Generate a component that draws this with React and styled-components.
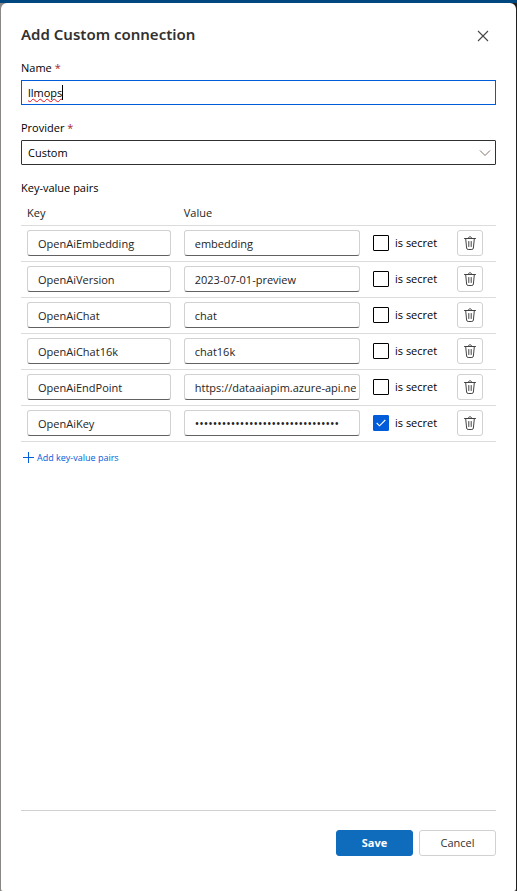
import React, { useState } from "react";
import styled, { createGlobalStyle } from "styled-components";

const GlobalStyle = createGlobalStyle`
  * { box-sizing: border-box; }
  body {
    margin: 0;
    background: #8a8886;
    color: #000;
    font: 11px/16px "Open Sans", "Noto Sans", sans-serif;
  }
  button, input, select { font: inherit; color: inherit; }
`;

const Page = styled.div`
  display: flex;
  flex-direction: column;
  min-height: 100vh;
  border-top: 3px solid #00467f;
  background: linear-gradient(90deg, #8a8886 50%, #1f1f1f 50%);
`;

const Panel = styled.form`
  flex: 1;
  display: flex;
  flex-direction: column;
  margin: 0 1px;
  padding: 20px 20px 35px;
  border-radius: 6px 6px 2px 2px;
  background: #fff;
`;

const Header = styled.header`
  display: flex;
  align-items: flex-start;
  justify-content: space-between;
  height: 24px;
`;

const Title = styled.h1`
  margin: 0;
  font: 600 15px/22px "Noto Sans", "Open Sans", sans-serif;
  color: #323130;
`;

const CloseButton = styled.button`
  display: flex;
  align-items: center;
  justify-content: center;
  width: 26px;
  height: 26px;
  padding: 0;
  border: 0;
  background: none;
  color: #484644;
`;

const Field = styled.div`
  display: flex;
  flex-direction: column;
  gap: 4px;
  margin-top: ${(p) => p.$space}px;
`;

const Label = styled.label`
  font-weight: 500;
`;

const Required = styled.span`
  color: #a4262c;
  font-weight: 400;
`;

const NameBox = styled.div`
  display: flex;
  align-items: center;
  height: 25px;
  padding: 0 6px;
  border: 1px solid #015cda;
`;

const NameInput = styled.input`
  field-sizing: content;
  height: 22px;
  padding: 0;
  border: 0;
  outline: 0;
  background: none;
  line-height: 22px;
  text-decoration: underline wavy #e81123 1px;
  text-decoration-skip-ink: none;
  text-underline-offset: 1px;
`;

const Caret = styled.span`
  width: 1px;
  height: 15px;
  background: #000;
`;

const SelectBox = styled.div`
  display: grid;
  align-items: center;
  > * { grid-area: 1 / 1; }
  > svg { justify-self: end; margin-right: 5px; pointer-events: none; }
`;

const Select = styled.select`
  appearance: none;
  width: 100%;
  height: 25px;
  padding: 0 6px;
  border: 1px solid #323130;
  border-radius: 1px;
  background: #fff;
`;

const SectionTitle = styled.h2`
  margin: 15px 0 5px;
  font: 500 11px/16px "Open Sans", "Noto Sans", sans-serif;
`;

const Table = styled.table`
  width: 100%;
  table-layout: fixed;
  border-collapse: collapse;
`;

const Column = styled.col`
  width: ${(p) => p.$width};
`;

const Row = styled.tr`
  height: ${(p) => (p.$head ? 24 : 36)}px;
  border-bottom: 1px solid #dcdcdc;
`;

const HeadCell = styled.th`
  padding: 0 6px;
  text-align: left;
  font-weight: 500;
  color: #201f1e;
`;

const Cell = styled.td`
  padding: 0 7px 0 6px;
`;

const TextInput = styled.input`
  display: block;
  width: 100%;
  height: 26px;
  padding: 0 3px 0 10px;
  border: 1px solid #d1d1d1;
  border-bottom-color: #616161;
  border-radius: 3px;
  outline: 0;
  background: #fff;
  color: #242424;
  &[type="password"] { font-size: 12px; }
`;

const SecretLabel = styled.label`
  display: flex;
  align-items: center;
  gap: 6px;
  white-space: nowrap;
`;

const CheckBox = styled.span`
  display: grid;
  place-items: center;
  > * { grid-area: 1 / 1; }
  > svg { pointer-events: none; }
`;

const CheckInput = styled.input`
  appearance: none;
  width: 16px;
  height: 16px;
  margin: 0;
  border: 1px solid #000;
  border-radius: 1px;
  background: #fff;
  &:checked { background: #015cda; border-color: #015cda; }
`;

const DeleteButton = styled.button`
  display: flex;
  align-items: center;
  justify-content: center;
  width: 26px;
  height: 26px;
  padding: 0;
  border: 1px solid #d1d1d1;
  border-radius: 3px;
  background: #fff;
  color: #424242;
`;

const AddButton = styled.button`
  display: flex;
  align-items: center;
  align-self: flex-start;
  gap: 2px;
  margin-top: 8px;
  padding: 0 2px;
  border: 0;
  background: none;
  color: #015cda;
  font-size: 9px;
`;

const Footer = styled.footer`
  display: flex;
  justify-content: flex-end;
  gap: 6px;
  margin-top: auto;
  padding-top: 19px;
  border-top: 1px solid #d1d1d1;
`;

const ActionButton = styled.button`
  width: 77px;
  height: 26px;
  padding: 0;
  border: 1px solid ${(p) => (p.$primary ? "#0f6cbd" : "#d1d1d1")};
  border-radius: 3px;
  background: ${(p) => (p.$primary ? "#0f6cbd" : "#fff")};
  color: ${(p) => (p.$primary ? "#fff" : "#323130")};
  font-weight: ${(p) => (p.$primary ? 700 : 500)};
`;

const CloseIcon = () => (
  <svg width="12" height="12" viewBox="0 0 12 12" fill="none" stroke="currentColor" strokeWidth="1.1">
    <path d="M1 1l10 10M11 1L1 11" />
  </svg>
);

const ChevronIcon = () => (
  <svg width="12" height="8" viewBox="0 0 12 8" fill="none" stroke="#80706a" strokeWidth="1">
    <path d="M1 1.5l5 5 5-5" />
  </svg>
);

const CheckIcon = () => (
  <svg width="10" height="8" viewBox="0 0 10 8" fill="none" stroke="#fff" strokeWidth="1.1">
    <path d="M.7 4l2.8 2.8L9.3 1" />
  </svg>
);

const TrashIcon = () => (
  <svg width="14" height="14" viewBox="0 0 14 14" fill="none" stroke="currentColor" strokeWidth="1" strokeLinecap="round">
    <path d="M1.5 2.5h11M5.2 2.5c0-2.4 3.6-2.4 3.6 0M2.7 2.8l.9 9.2q.2 1.5 1.6 1.5h3.6q1.4 0 1.6-1.5l.9-9.2M5.8 5.5v5M8.2 5.5v5" />
  </svg>
);

const PlusIcon = () => (
  <svg width="12" height="12" viewBox="0 0 12 12" fill="none" stroke="currentColor" strokeWidth="1">
    <path d="M5.5 0v11M0 5.5h11" />
  </svg>
);

const initialPairs = [
  { key: "OpenAiEmbedding", value: "embedding", secret: false },
  { key: "OpenAiVersion", value: "2023-07-01-preview", secret: false },
  { key: "OpenAiChat", value: "chat", secret: false },
  { key: "OpenAiChat16k", value: "chat16k", secret: false },
  { key: "OpenAiEndPoint", value: "https://dataaiapim.azure-api.net", secret: false },
  { key: "OpenAiKey", value: "0123456789abcdef0123456789abcdef", secret: true },
];

function PairRow({ pair, onChange, onDelete }) {
  return (
    <Row>
      <Cell>
        <TextInput aria-label="Key" value={pair.key} onChange={(e) => onChange({ key: e.target.value })} />
      </Cell>
      <Cell>
        <TextInput
          aria-label="Value"
          type={pair.secret ? "password" : "text"}
          value={pair.value}
          onChange={(e) => onChange({ value: e.target.value })}
        />
      </Cell>
      <Cell>
        <SecretLabel>
          <CheckBox>
            <CheckInput type="checkbox" checked={pair.secret} onChange={(e) => onChange({ secret: e.target.checked })} />
            {pair.secret && <CheckIcon />}
          </CheckBox>
          is secret
        </SecretLabel>
      </Cell>
      <Cell>
        <DeleteButton type="button" aria-label="Delete" onClick={onDelete}>
          <TrashIcon />
        </DeleteButton>
      </Cell>
    </Row>
  );
}

export default function App() {
  const [name, setName] = useState("llmops");
  const [pairs, setPairs] = useState(initialPairs);
  const update = (index, change) =>
    setPairs(pairs.map((pair, i) => (i === index ? { ...pair, ...change } : pair)));

  return (
    <Page>
      <GlobalStyle />
      <Panel onSubmit={(e) => e.preventDefault()}>
        <Header>
          <Title>Add Custom connection</Title>
          <CloseButton type="button" aria-label="Close">
            <CloseIcon />
          </CloseButton>
        </Header>
        <Field $space={13}>
          <Label htmlFor="name">
            Name <Required>*</Required>
          </Label>
          <NameBox>
            <NameInput id="name" value={name} onChange={(e) => setName(e.target.value)} />
            <Caret />
          </NameBox>
        </Field>
        <Field $space={15}>
          <Label htmlFor="provider">
            Provider <Required>*</Required>
          </Label>
          <SelectBox>
            <Select id="provider">
              <option>Custom</option>
            </Select>
            <ChevronIcon />
          </SelectBox>
        </Field>
        <SectionTitle>Key-value pairs</SectionTitle>
        <Table>
          <colgroup>
            <Column $width="33%" />
            <Column $width="auto" />
            <Column $width="84px" />
            <Column $width="45px" />
          </colgroup>
          <thead>
            <Row $head>
              <HeadCell>Key</HeadCell>
              <HeadCell>Value</HeadCell>
              <HeadCell />
              <HeadCell />
            </Row>
          </thead>
          <tbody>
            {pairs.map((pair, i) => (
              <PairRow
                key={i}
                pair={pair}
                onChange={(change) => update(i, change)}
                onDelete={() => setPairs(pairs.filter((_, j) => j !== i))}
              />
            ))}
          </tbody>
        </Table>
        <AddButton type="button" onClick={() => setPairs([...pairs, { key: "", value: "", secret: false }])}>
          <PlusIcon />
          Add key-value pairs
        </AddButton>
        <Footer>
          <ActionButton $primary type="submit">Save</ActionButton>
          <ActionButton type="button">Cancel</ActionButton>
        </Footer>
      </Panel>
    </Page>
  );
}
